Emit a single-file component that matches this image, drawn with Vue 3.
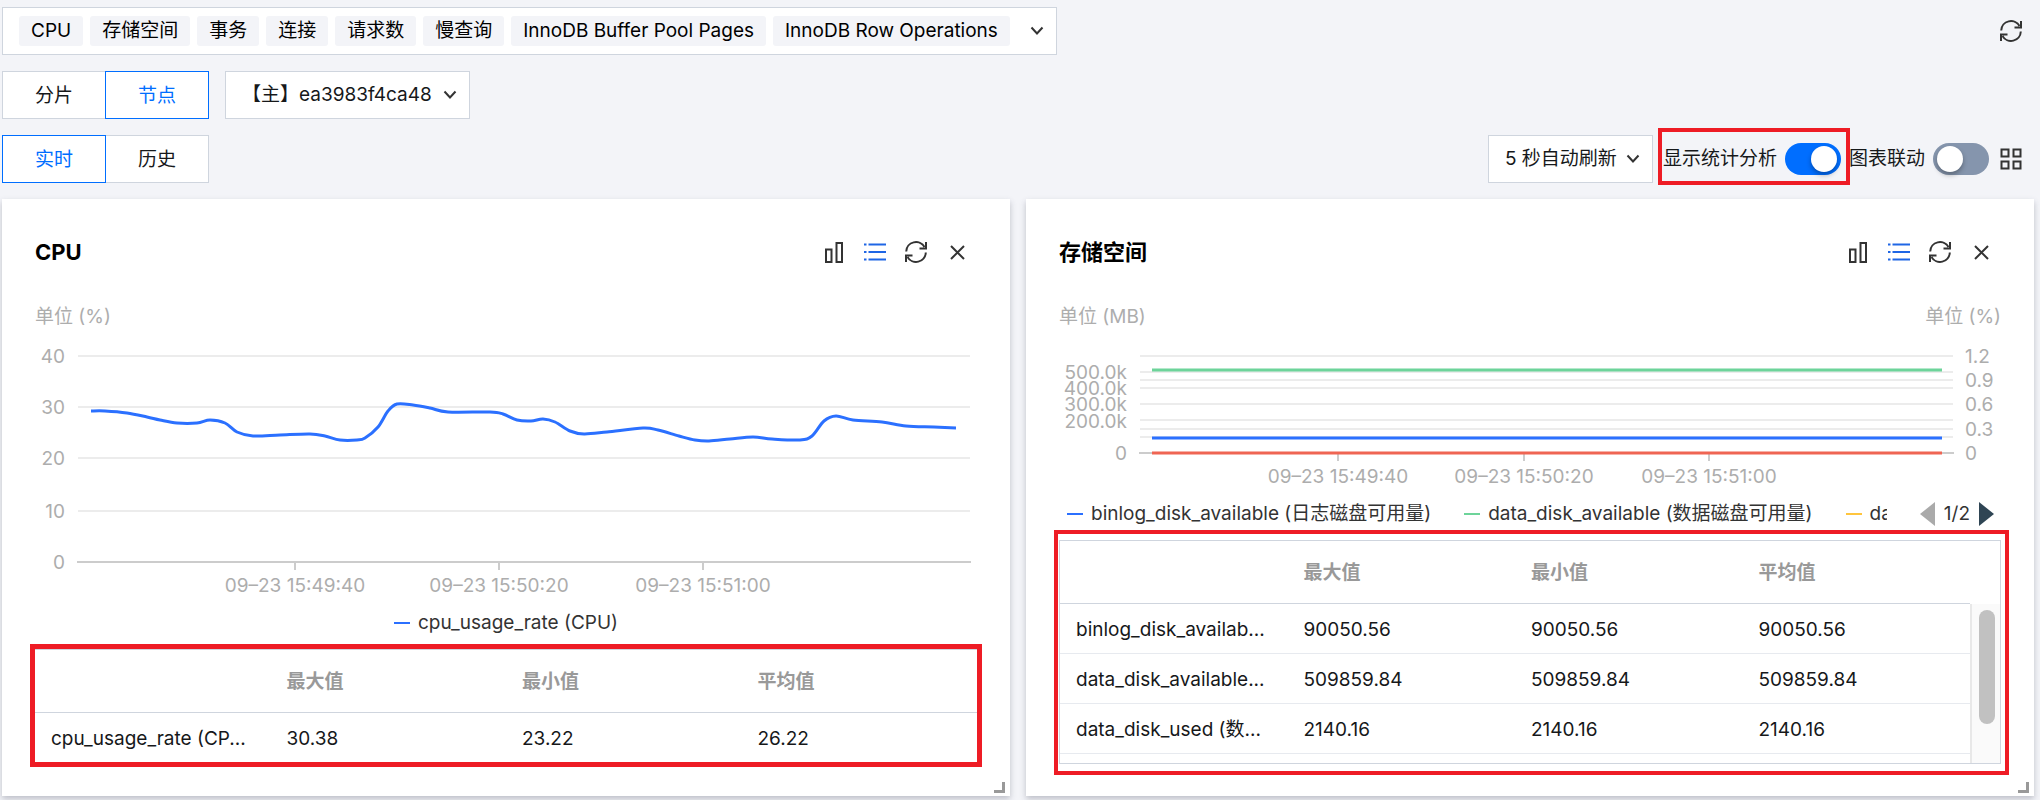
<script setup>
import { ref } from 'vue'

const metrics = ['CPU', '存储空间', '事务', '连接', '请求数', '慢查询', 'InnoDB Buffer Pool Pages', 'InnoDB Row Operations']
const scope = ref('节点')
const range = ref('实时')
const showStats = ref(true)
const linked = ref(false)

const cpuPoints = [
  [56, 82], [70, 82], [92, 84], [112, 88], [125, 91], [142, 94], [162, 94], [175, 91], [190, 94], [202, 103],
  [218, 107], [245, 106], [275, 105], [290, 107], [305, 111], [322, 111], [330, 109], [343, 98], [353, 82],
  [362, 75], [378, 76], [395, 79], [413, 83], [455, 83], [468, 85], [482, 91], [496, 92], [508, 90], [520, 93],
  [535, 102], [549, 105], [572, 103], [608, 99], [623, 101], [644, 107], [660, 111], [674, 112], [695, 110],
  [718, 108], [737, 110], [765, 111], [777, 107], [789, 92], [801, 87], [818, 91], [847, 93], [871, 97],
  [899, 98], [921, 99]
]

function smooth(points) {
  let d = `M${points[0][0]} ${points[0][1]}`
  for (let i = 0; i < points.length - 1; i++) {
    const a = points[Math.max(i - 1, 0)]
    const b = points[i]
    const c = points[i + 1]
    const e = points[Math.min(i + 2, points.length - 1)]
    d += `C${b[0] + (c[0] - a[0]) / 6} ${b[1] + (c[1] - a[1]) / 6} ${c[0] - (e[0] - b[0]) / 6} ${c[1] - (e[1] - b[1]) / 6} ${c[0]} ${c[1]}`
  }
  return d
}

const cards = [
  {
    title: 'CPU',
    leftUnit: '单位 (%)',
    rightUnit: '',
    chart: {
      height: 276, x1: 43, x2: 935, axis: 233, labelX: 30,
      grid: [27, 78, 129, 182],
      left: [['40', 27], ['30', 78], ['20', 129], ['10', 182], ['0', 233]],
      right: [],
      ticks: [[260, '09–23 15:49:40'], [464, '09–23 15:50:20'], [668, '09–23 15:51:00']],
      lines: [{ d: smooth(cpuPoints), color: '#2b70ff', width: 3 }]
    },
    legend: [{ name: 'cpu_usage_rate (CPU)', color: '#2b70ff' }],
    paged: false,
    rows: [['cpu_usage_rate (CP...', '30.38', '23.22', '26.22']]
  },
  {
    title: '存储空间',
    leftUnit: '单位 (MB)',
    rightUnit: '单位 (%)',
    chart: {
      height: 172, x1: 81, x2: 894, axis: 124, labelX: 68,
      grid: [27, 43, 51, 59, 75, 91, 100, 108],
      left: [['500.0k', 43], ['400.0k', 59], ['300.0k', 75], ['200.0k', 92], ['0', 124]],
      right: [['1.2', 27], ['0.9', 51], ['0.6', 75], ['0.3', 100], ['0', 124]],
      ticks: [[279, '09–23 15:49:40'], [465, '09–23 15:50:20'], [650, '09–23 15:51:00']],
      lines: [
        { d: 'M93 109H883', color: '#2b70ff', width: 3 },
        { d: 'M93 41H883', color: '#6dd49a', width: 3 },
        { d: 'M93 124H883', color: '#ef6553', width: 3 }
      ]
    },
    legend: [
      { name: 'binlog_disk_available (日志磁盘可用量)', color: '#2b70ff' },
      { name: 'data_disk_available (数据磁盘可用量)', color: '#6dd49a' },
      { name: 'da', color: '#ffc53d', cut: true }
    ],
    paged: true,
    rows: [
      ['binlog_disk_availab...', '90050.56', '90050.56', '90050.56'],
      ['data_disk_available...', '509859.84', '509859.84', '509859.84'],
      ['data_disk_used (数...', '2140.16', '2140.16', '2140.16']
    ]
  }
]
</script>

<template>
  <main class="page">
    <div class="bar">
      <div class="metric-select">
        <span v-for="m in metrics" :key="m" class="tag">{{ m }}</span>
        <button type="button" class="icon-btn chev-btn" aria-label="展开指标">
          <svg class="chev" viewBox="0 0 14 10"><path d="M1.5 1.5L7 7.5l5.5-6" /></svg>
        </button>
      </div>
      <button type="button" class="icon-btn end" aria-label="刷新">
        <svg viewBox="0 0 24 24"><path d="M2.2 11.5A9.8 9.8 0 0 1 20.500 7M22 2v6.500h-6.500M21.800 12.500A9.800 9.800 0 0 1 3.500 17M2 22v-6.500h6.500" /></svg>
      </button>
    </div>

    <div class="bar">
      <div class="segments">
        <button v-for="s in ['分片', '节点']" :key="s" type="button" :class="{ active: scope === s }" @click="scope = s">{{ s }}</button>
      </div>
      <div class="dropdown node">
        <select aria-label="节点选择"><option>【主】ea3983f4ca48</option></select>
        <svg class="chev" viewBox="0 0 14 10"><path d="M1.5 1.5L7 7.5l5.5-6" /></svg>
      </div>
    </div>

    <div class="bar">
      <div class="segments">
        <button v-for="r in ['实时', '历史']" :key="r" type="button" :class="{ active: range === r }" @click="range = r">{{ r }}</button>
      </div>
      <div class="tools">
        <div class="dropdown interval">
          <select aria-label="刷新间隔"><option>5 秒自动刷新</option></select>
          <svg class="chev" viewBox="0 0 14 10"><path d="M1.5 1.5L7 7.5l5.5-6" /></svg>
        </div>
        <label class="switch marked">显示统计分析<input v-model="showStats" type="checkbox" role="switch"></label>
        <label class="switch">图表联动<input v-model="linked" type="checkbox" role="switch"></label>
        <button type="button" class="icon-btn layout" aria-label="布局">
          <svg viewBox="0 0 24 24"><path d="M2.500 2.500h7v7h-7zM14.500 2.500h7v7h-7zM2.500 14.500h7v7h-7zM14.500 14.500h7v7h-7z" /></svg>
        </button>
      </div>
    </div>

    <div class="cards">
      <section v-for="card in cards" :key="card.title" class="card">
        <header class="card-head">
          <h2>{{ card.title }}</h2>
          <div class="actions">
            <button type="button" class="icon-btn" aria-label="柱状图">
              <svg viewBox="0 0 24 24"><path d="M4 9.500h5.500v12.500h-5.500zM14.500 3h5.500v19h-5.500z" /></svg>
            </button>
            <button type="button" class="icon-btn on" aria-label="统计列表">
              <svg viewBox="0 0 24 24"><path d="M1 4.500h2.500M5.500 4.500H23M1 12h2.500M5.500 12H23M1 19.500h2.500M5.500 19.500H23" /></svg>
            </button>
            <button type="button" class="icon-btn" aria-label="刷新图表">
              <svg viewBox="0 0 24 24"><path d="M2.200 11.500A9.800 9.800 0 0 1 20.500 7M22 2v6.500h-6.500M21.800 12.500A9.800 9.800 0 0 1 3.500 17M2 22v-6.500h6.500" /></svg>
            </button>
            <button type="button" class="icon-btn" aria-label="关闭">
              <svg viewBox="0 0 24 24"><path d="M6 6l13 13M19 6L6 19" /></svg>
            </button>
          </div>
        </header>
        <div class="units"><span>{{ card.leftUnit }}</span><span>{{ card.rightUnit }}</span></div>

        <svg class="chart" :viewBox="`0 0 942 ${card.chart.height}`" role="img" :aria-label="card.title">
          <line v-for="y in card.chart.grid" :key="y" class="grid" :x1="card.chart.x1" :x2="card.chart.x2" :y1="y" :y2="y" />
          <line class="axis" :x1="card.chart.x1 - 1" :x2="card.chart.x2 + 1" :y1="card.chart.axis" :y2="card.chart.axis" />
          <text v-for="l in card.chart.left" :key="l[0]" text-anchor="end" :x="card.chart.labelX" :y="l[1] + 7">{{ l[0] }}</text>
          <text v-for="l in card.chart.right" :key="l[0]" :x="card.chart.x2 + 12" :y="l[1] + 7">{{ l[0] }}</text>
          <g v-for="t in card.chart.ticks" :key="t[0]">
            <line class="axis" :x1="t[0]" :x2="t[0]" :y1="card.chart.axis" :y2="card.chart.axis + 8" />
            <text text-anchor="middle" :x="t[0]" :y="card.chart.axis + 30">{{ t[1] }}</text>
          </g>
          <path v-for="s in card.chart.lines" :key="s.color" :d="s.d" :stroke="s.color" :stroke-width="s.width" fill="none" />
        </svg>

        <div class="legend" :class="{ paged: card.paged }">
          <span v-for="l in card.legend" :key="l.name" class="key" :class="{ cut: l.cut }">
            <i :style="{ background: l.color }"></i><span>{{ l.name }}</span>
          </span>
          <span v-if="card.paged" class="pager">
            <button type="button" class="icon-btn" aria-label="上一页"><svg class="prev" viewBox="0 0 15 24"><path d="M15 0v24L0 12z" /></svg></button>
            <span>1/2</span>
            <button type="button" class="icon-btn" aria-label="下一页"><svg class="next" viewBox="0 0 15 24"><path d="M0 0v24l15-12z" /></svg></button>
          </span>
        </div>

        <div class="stats" :class="{ scrolls: card.paged }">
          <table>
            <thead>
              <tr><th aria-label="指标"></th><th>最大值</th><th>最小值</th><th>平均值</th></tr>
            </thead>
            <tbody>
              <tr v-for="r in card.rows" :key="r[0]"><td v-for="(c, i) in r" :key="i">{{ c }}</td></tr>
            </tbody>
          </table>
          <div v-if="card.paged" class="track"><div class="thumb"></div></div>
        </div>
        <i class="resize"></i>
      </section>
    </div>
  </main>
</template>

<style>
body {
  background: #f3f4f8;
}
</style>

<style scoped>
* {
  box-sizing: border-box;
}
.page {
  padding: 7px 6px 4px 2px;
  display: flex;
  flex-direction: column;
  gap: 16px;
  font: 19px/24px Inter, "Noto Sans CJK SC", sans-serif;
  color: #16181a;
}
button,
select {
  font: inherit;
  color: inherit;
}
svg {
  display: block;
}
.bar {
  display: flex;
  align-items: center;
  gap: 16px;
  height: 48px;
}
.metric-select {
  display: flex;
  align-items: center;
  gap: 7px;
  height: 48px;
  padding: 0 7px 0 16px;
  background: #fff;
  border: 1px solid #cfd5de;
}
.tag {
  height: 30px;
  padding: 0 12px;
  line-height: 30px;
  border-radius: 3px;
  background: #f3f4f8;
  color: #000;
  white-space: nowrap;
}
.icon-btn {
  padding: 0;
  border: 0;
  background: none;
  width: 24px;
  height: 24px;
  display: flex;
  align-items: center;
  justify-content: center;
  flex: none;
}
.chev-btn {
  margin-left: 8px;
}
.icon-btn svg {
  width: 24px;
  height: 24px;
  fill: none;
  stroke: #333;
  stroke-width: 2;
}
.icon-btn.on svg {
  stroke: #1f66e5;
}
.icon-btn .chev,
.chev {
  width: 14px;
  height: 10px;
  fill: none;
  stroke: #333;
  stroke-width: 2;
}
.end {
  margin: 0 11px 0 auto;
}
.segments {
  display: flex;
}
.segments button {
  width: 104px;
  height: 48px;
  padding: 2px 0 0;
  background: #fff;
  border: 1px solid #cfd5de;
}
.segments button + button {
  margin-left: -1px;
}
.segments .active {
  position: relative;
  border-color: #006eff;
  color: #006eff;
}
.dropdown {
  position: relative;
}
.dropdown select {
  width: 100%;
  height: 48px;
  padding: 0 16px;
  appearance: none;
  background: #fff;
  border: 1px solid #cfd5de;
  border-radius: 0;
}
.dropdown .chev {
  position: absolute;
  right: 13px;
  top: 19px;
  pointer-events: none;
}
.node {
  width: 245px;
}
.interval {
  width: 165px;
}
.tools {
  margin-left: auto;
  margin-right: 11px;
  display: flex;
  align-items: center;
  gap: 8px;
}
.layout {
  margin-left: 2px;
}
.switch {
  display: flex;
  align-items: center;
  gap: 8px;
  height: 48px;
  white-space: nowrap;
}
.marked {
  position: relative;
  margin-left: 2px;
}
.marked::after {
  content: "";
  position: absolute;
  inset: -7px -9px -2px -5px;
  border: 4px solid #ee1c25;
  pointer-events: none;
}
.switch input {
  appearance: none;
  margin: 0;
  width: 56px;
  height: 32px;
  padding: 3px 4px;
  border-radius: 16px;
  background: #8595ad;
  display: flex;
}
.switch input::before {
  content: "";
  width: 26px;
  height: 26px;
  border-radius: 50%;
  background: #fff;
  box-shadow: 0 3px 5px rgba(0, 0, 0, 0.3);
}
.switch input:checked {
  background: #006eff;
  justify-content: flex-end;
}
.cards {
  display: grid;
  grid-template-columns: 1fr 1fr;
  gap: 16px;
}
.card {
  position: relative;
  min-width: 0;
  padding: 33px 33px 32px;
  background: #fff;
  box-shadow: 0 3px 6px rgba(54, 58, 80, 0.28);
}
.card-head {
  display: flex;
  align-items: center;
  justify-content: space-between;
  height: 40px;
}
.card-head h2 {
  margin: 0;
  font-size: 22px;
  font-weight: 700;
  color: #000;
}
.actions {
  display: flex;
  gap: 17px;
  margin-right: 8px;
}
.units {
  display: flex;
  justify-content: space-between;
  margin-top: 33px;
  color: #adadad;
}
.chart {
  width: 100%;
  height: auto;
}
.chart text {
  font-size: 19px;
  fill: #adadad;
}
.chart .grid {
  stroke: #ececec;
  stroke-width: 2;
}
.chart .axis {
  stroke: #ccc;
  stroke-width: 2;
}
.legend {
  display: flex;
  justify-content: center;
  margin: 6px 0 14px;
  color: #333;
  white-space: nowrap;
}
.legend.paged {
  justify-content: flex-start;
  gap: 33px;
  margin: 1px 0 14px;
  padding: 0 7px 0 8px;
}
.key {
  display: flex;
  align-items: center;
  gap: 8px;
}
.key i {
  flex: none;
  width: 16px;
  height: 2px;
}
.key.cut {
  width: 41px;
  overflow: hidden;
}
.pager {
  display: flex;
  align-items: center;
  gap: 9px;
  margin-left: auto;
}
.pager .icon-btn,
.pager svg {
  width: 15px;
  height: 24px;
  stroke: none;
}
.pager .prev {
  fill: #aaa;
}
.pager .next {
  fill: #2f4554;
}
.stats {
  position: relative;
  border-top: 1px solid #cfd5de;
}
.stats::after {
  content: "";
  position: absolute;
  inset: -6px -5px -5px;
  border: 5px solid #ee1c25;
  pointer-events: none;
}
.stats.scrolls {
  display: grid;
  grid-template-columns: 1fr 30px;
  border: 1px solid #cfd5de;
  padding-bottom: 9px;
}
.stats.scrolls::after {
  inset: -11px -9px -12px -6px;
  border-width: 4px;
}
table {
  width: 100%;
  table-layout: fixed;
  border-collapse: separate;
  border-spacing: 0;
}
th {
  height: 63px;
  padding: 2px 16px 0;
  text-align: left;
  font-weight: 600;
  color: #999;
  border-bottom: 1px solid #cfd5de;
}
td {
  height: 49px;
  padding: 2px 0 0 16px;
  white-space: nowrap;
}
.scrolls td {
  height: 50px;
  border-bottom: 1px solid #e7eaef;
}
.track {
  margin: 63px 0 -9px;
  padding: 6px 7px;
  background: #fafafa;
  border-left: 2px solid #e8e8e8;
}
.thumb {
  width: 16px;
  height: 114px;
  border-radius: 8px;
  background: #c1c1c1;
}
.resize {
  position: absolute;
  right: 5px;
  bottom: 3px;
  width: 11px;
  height: 11px;
  border: solid #999;
  border-width: 0 3px 3px 0;
}
</style>
